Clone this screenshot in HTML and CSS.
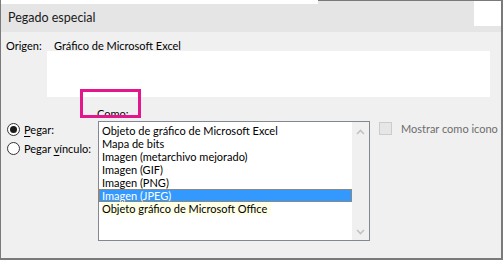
FILE: index.html
```html
<!DOCTYPE html>
<html lang="es">
<head>
    <meta charset="UTF-8">
    <title>Pegado especial</title>
    <link rel="stylesheet" href="styles.css">
</head>
<body>
    <div class="dialog">
        <div class="header">
            <div class="header-main">
                <div class="strip">
                    <div class="strip-white"></div>
                    <div class="strip-edge"></div>
                </div>
                <div class="title">Pegado especial</div>
            </div>
            <div class="close">
                <div class="close-box"></div>
            </div>
        </div>

        <div class="content">
            <div class="origin">
                <div class="origin-label">Origen:</div>
                <div class="origin-right">
                    <div class="origin-text">Gráfico de Microsoft Excel</div>
                    <div class="origin-box"></div>
                </div>
            </div>

            <div class="as-row">
                <span class="as-label">Como:</span>
                <div class="highlight"></div>
            </div>

            <div class="main">
                <div class="radios">
                    <label class="radio-row">
                        <span class="radio checked"></span>
                        <span><u>P</u>egar:</span>
                    </label>
                    <label class="radio-row">
                        <span class="radio"></span>
                        <span>Pegar <u>v</u>ínculo:</span>
                    </label>
                </div>

                <div class="listbox">
                    <ul class="items">
                        <li>Objeto de gráfico de Microsoft Excel</li>
                        <li>Mapa de bits</li>
                        <li>Imagen (metarchivo mejorado)</li>
                        <li>Imagen (GIF)</li>
                        <li>Imagen (PNG)</li>
                        <li class="selected">Imagen (JPEG)</li>
                        <li><span class="hint">Objeto gráfico de Microsoft Office</span></li>
                    </ul>
                    <div class="scrollbar">
                        <svg width="9" height="6" viewBox="0 0 9 6"><path d="M1 5 L4.5 1.5 L8 5" fill="none" stroke="#c2c2c2" stroke-width="1.6"/></svg>
                        <svg width="9" height="6" viewBox="0 0 9 6"><path d="M1 1 L4.5 4.5 L8 1" fill="none" stroke="#c2c2c2" stroke-width="1.6"/></svg>
                    </div>
                </div>

                <div class="options">
                    <label class="check-row">
                        <span class="checkbox"></span>
                        <span>Mostrar como icono</span>
                    </label>
                </div>
            </div>
        </div>
    </div>
</body>
</html>
```

FILE: styles.css
```css
* {
    margin: 0;
    padding: 0;
    box-sizing: border-box;
}

body {
    background-color: #ffffff;
    font-family: 'Lato', 'Noto Sans', sans-serif;
    font-size: 11px;
    color: #000000;
}

.dialog {
    width: 503px;
    height: 260px;
    background-color: #f0f0f0;
    border-left: 1px solid #7a7a7a;
    border-right: 2px solid #7a7a7a;
    border-bottom: 2px solid #7a7a7a;
    display: flex;
    flex-direction: column;
    white-space: nowrap;
}

/* title bar */
.header {
    display: flex;
    height: 32px;
    background-color: #e5e5e5;
}

.header-main {
    flex: 1;
    display: flex;
    flex-direction: column;
}

.strip {
    display: flex;
    height: 4px;
}

.strip-white {
    width: 317px;
    background-color: #ffffff;
}

.strip-edge {
    flex: 1;
    border-top: 1px solid #7a7a7a;
}

.title {
    padding-left: 7px;
    padding-top: 6px;
    font-size: 12.5px;
    line-height: 16px;
    color: #1a1a1a;
}

.close {
    width: 27px;
    border-top: 1px solid #7a7a7a;
}

.close-box {
    height: 25px;
    background-color: #ffffff;
}

/* body */
.content {
    flex: 1;
    display: flex;
    flex-direction: column;
}

.origin {
    display: flex;
    margin-top: 7px;
}

.origin-label {
    width: 46px;
    padding-left: 5px;
    line-height: 14px;
}

.origin-right {
    width: 443px;
}

.origin-text {
    padding-left: 7px;
    line-height: 14px;
}

.origin-box {
    height: 46px;
    background-color: #ffffff;
    margin-top: -2px;
}

.as-row {
    position: relative;
    height: 24px;
    padding-left: 96px;
    padding-top: 10px;
    line-height: 14px;
}

.highlight {
    position: absolute;
    left: 79px;
    top: -8px;
    width: 61px;
    height: 29px;
    border: 3px solid #e3168c;
}

.main {
    display: flex;
}

.radios {
    width: 97px;
    padding-left: 6px;
    padding-top: 2px;
    display: flex;
    flex-direction: column;
    gap: 6px;
}

.radio-row {
    display: flex;
    align-items: center;
    gap: 4px;
    line-height: 13px;
}

.radio {
    flex: none;
    width: 13px;
    height: 13px;
    border: 1px solid #333333;
    border-radius: 50%;
    background-color: #ffffff;
    display: flex;
    align-items: center;
    justify-content: center;
}

.radio.checked::after {
    content: '';
    width: 7px;
    height: 7px;
    border-radius: 50%;
    background-color: #1a1a1a;
}

u {
    text-decoration-thickness: 1px;
    text-underline-offset: 2px;
}

.listbox {
    width: 272px;
    height: 120px;
    border: 1px solid #828790;
    background-color: #ffffff;
    display: flex;
}

.items {
    flex: 1;
    list-style: none;
    padding-top: 2px;
}

.items li {
    height: 13px;
    line-height: 13px;
    padding-left: 3px;
}

.items li.selected {
    background-color: #3399ff;
    color: #ffffff;
    outline: 1px dotted #e07b00;
    outline-offset: -1px;
}

.hint {
    display: inline-block;
    background-color: #ffffe6;
    padding-right: 4px;
}

.scrollbar {
    width: 17px;
    background-color: #f0f0f0;
    display: flex;
    flex-direction: column;
    justify-content: space-between;
    align-items: center;
    padding: 7px 0 5px;
}

.options {
    padding-left: 9px;
    padding-top: 1px;
}

.check-row {
    display: flex;
    align-items: center;
    gap: 9px;
    color: #6d6d6d;
    line-height: 13px;
}

.checkbox {
    flex: none;
    width: 13px;
    height: 13px;
    border: 1px solid #cccccc;
    background-color: #e6e6e6;
}
```
